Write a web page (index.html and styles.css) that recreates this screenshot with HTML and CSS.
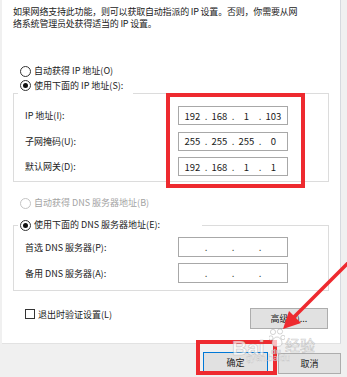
FILE: index.html
```html
<!DOCTYPE html>
<html lang="zh-CN">
<head>
  <meta charset="UTF-8" />
  <title>Internet 协议版本 4 (TCP/IPv4) 属性</title>
  <link rel="stylesheet" href="styles.css">
</head>
<body>
<div class="panel">
  <p class="intro">如果网络支持此功能，则可以获取自动指派的 IP 设置。否则，你需要从网<br>络系统管理员处获得适当的 IP 设置。</p>

  <label class="radio first"><span class="circle"></span>自动获得 IP 地址(O)</label>

  <fieldset class="group ip-group">
    <legend class="radio"><span class="circle on"></span>使用下面的 IP 地址(S):</legend>
    <div class="rows">
      <span>IP 地址(I):</span>
      <div class="ipbox"><span>192</span><i>.</i><span>168</span><i>.</i><span>1</span><i>.</i><span>103</span></div>
      <span>子网掩码(U):</span>
      <div class="ipbox"><span>255</span><i>.</i><span>255</span><i>.</i><span>255</span><i>.</i><span>0</span></div>
      <span>默认网关(D):</span>
      <div class="ipbox"><span>192</span><i>.</i><span>168</span><i>.</i><span>1</span><i>.</i><span>1</span></div>
    </div>
  </fieldset>

  <label class="radio off"><span class="circle"></span>自动获得 DNS 服务器地址(B)</label>

  <fieldset class="group dns-group">
    <legend class="radio"><span class="circle on"></span>使用下面的 DNS 服务器地址(E):</legend>
    <div class="rows">
      <span>首选 DNS 服务器(P):</span>
      <div class="ipbox tall"><span></span><i>.</i><span></span><i>.</i><span></span><i>.</i><span></span></div>
      <span>备用 DNS 服务器(A):</span>
      <div class="ipbox tall"><span></span><i>.</i><span></span><i>.</i><span></span><i>.</i><span></span></div>
    </div>
  </fieldset>

  <div class="bottom-row">
    <label class="check"><span class="box"></span>退出时验证设置(L)</label>
    <button class="btn adv">高级(V)...</button>
  </div>
</div>

<div class="footer">
  <button class="btn ok">确定</button>
  <button class="btn cancel">取消</button>
</div>

<!-- Markierungen / Wasserzeichen -->
<div class="marks">
  <div class="redbox box-ip"></div>
  <div class="redbox box-ok"></div>
  <div class="watermark">
    <span class="wm-bai">Bai</span>
    <svg class="paw" width="16" height="22" viewBox="0 0 16 22">
      <circle cx="4" cy="4" r="2.6"/><circle cx="11" cy="3.5" r="2.6"/>
      <circle cx="1.8" cy="10" r="2.2"/><circle cx="14" cy="9.5" r="2.2"/>
      <path d="M8 9 C4 9 2 15 3.5 17 C5 19 11 19 12.5 17 C14 15 12 9 8 9 Z"/>
    </svg>
    <span class="wm-du">du</span>
    <span class="wm-jy">经验</span>
    <span class="wm-url">gyan.baidu</span>
  </div>
  <svg class="arrow" width="347" height="377" viewBox="0 0 347 377">
    <line x1="352" y1="259" x2="292" y2="319" />
    <polygon points="283,329 289,311 301,323" />
  </svg>
</div>
</body>
</html>
```

FILE: styles.css
```css
body {
  margin: 0;
  width: 347px;
  height: 377px;
  overflow: hidden;
  background: #f0f0f0;
  font-family: "Noto Sans CJK SC", "Noto Sans", sans-serif;
  font-size: 9px;
  color: #222;
  position: relative;
}
.panel {
  margin-left: 2px;
  width: 339px;
  height: 344px;
  box-sizing: border-box;
  background: #fff;
  border-right: 1px solid #d6d9de;
  border-bottom: 1px solid #e2e2e2;
  padding: 6px 0 0 11px;
}
.intro {
  margin: 0;
  line-height: 12px;
  white-space: nowrap;
  letter-spacing: -0.2px;
}
.radio {
  display: flex;
  align-items: center;
  gap: 3px;
  height: 12px;
  line-height: 12px;
  white-space: nowrap;
}
label.radio {
  padding-left: 7px;
}
.radio.first {
  margin-top: 35px;
}
.radio.off {
  margin-top: 15px;
  color: #a3a3a3;
}
.circle {
  width: 11px;
  height: 11px;
  box-sizing: border-box;
  border: 1px solid #333;
  border-radius: 50%;
  display: grid;
  place-items: center;
  flex: none;
}
.radio.off .circle {
  border-color: #c4c4c4;
}
.circle.on::after {
  content: "";
  width: 5px;
  height: 5px;
  border-radius: 50%;
  background: #111;
}
.group {
  margin: 0;
  width: 316px;
  box-sizing: border-box;
  min-inline-size: 0;
  border: 1px solid #dcdcdc;
  padding: 0 0 5px 4px;
}
.group legend {
  padding: 0 10px 0 2px;
}
.ip-group {
  margin-top: 3px;
}
.ip-group legend {
  padding-bottom: 14px;
  align-items: flex-start;
}
.ip-group .rows {
  row-gap: 6.5px;
}
.dns-group {
  margin-top: 10px;
  padding-bottom: 7px;
}
.dns-group legend {
  padding-right: 42px;
}
.dns-group .rows {
  margin-top: 6px;
  row-gap: 6px;
}
.rows {
  margin-left: 7px;
  display: grid;
  grid-template-columns: 153px 110px;
  align-items: center;
}
.ipbox {
  height: 19px;
  box-sizing: border-box;
  border: 1px solid #a8a8a8;
  padding: 0 2px;
  display: flex;
  align-items: center;
  font-size: 9.5px;
  color: #1a1a1a;
}
.ipbox.tall {
  height: 20px;
}
.ipbox span {
  flex: 1;
  text-align: center;
}
.ipbox i {
  font-style: normal;
  width: 4px;
  text-align: center;
}
.bottom-row {
  width: 316px;
  margin-top: 17px;
  display: flex;
  justify-content: space-between;
  align-items: flex-start;
}
.check {
  display: flex;
  align-items: center;
  gap: 3px;
  height: 12px;
  padding-left: 12px;
}
.box {
  width: 10px;
  height: 10px;
  box-sizing: border-box;
  border: 1px solid #333;
}
.btn {
  font: inherit;
  color: #222;
  background: #e1e1e1;
  border: 1px solid #adadad;
  height: 21px;
  padding: 0;
  margin: 0;
}
.adv {
  width: 78px;
  margin-right: 1px;
}
.footer {
  display: flex;
  justify-content: flex-end;
  gap: 10px;
  padding: 8px 6px 0 0;
}
.ok {
  width: 65px;
  border-color: #0078d7;
}
.cancel {
  width: 63px;
  margin-top: 1px;
}
.marks {
  position: absolute;
  inset: 0;
  pointer-events: none;
}
.redbox {
  position: absolute;
  border: 4px solid #ee2a2f;
  box-sizing: border-box;
}
.box-ip {
  left: 166px;
  top: 93px;
  width: 139px;
  height: 95px;
}
.box-ok {
  left: 196px;
  top: 340px;
  width: 81px;
  height: 35px;
}
.arrow {
  position: absolute;
  left: 0;
  top: 0;
}
.arrow line {
  stroke: #ee2a2f;
  stroke-width: 3.5;
}
.arrow polygon {
  fill: #ee2a2f;
}
.watermark {
  position: absolute;
  left: 228px;
  top: 326px;
  width: 100px;
  height: 44px;
  color: rgba(255, 255, 255, 0.7);
  -webkit-text-stroke: 0.6px rgba(150, 150, 150, 0.5);
  font-family: "Liberation Sans", sans-serif;
}
.wm-bai {
  position: absolute;
  left: 4px;
  top: 11px;
  font-size: 21px;
  font-weight: bold;
  line-height: 21px;
}
.paw {
  position: absolute;
  left: 41px;
  top: 2px;
  fill: rgba(255, 255, 255, 0.7);
  stroke: rgba(150, 150, 150, 0.5);
  stroke-width: 0.8;
}
.wm-du {
  position: absolute;
  left: 43px;
  top: 21px;
  font-size: 8px;
  font-weight: bold;
}
.wm-jy {
  position: absolute;
  left: 57px;
  top: 11px;
  font-size: 15px;
  line-height: 16px;
  font-family: "Noto Sans CJK SC", sans-serif;
}
.wm-url {
  position: absolute;
  left: 18px;
  top: 28px;
  font-size: 9px;
  line-height: 9px;
  -webkit-text-stroke: 0.4px rgba(150, 150, 150, 0.45);
}
```
